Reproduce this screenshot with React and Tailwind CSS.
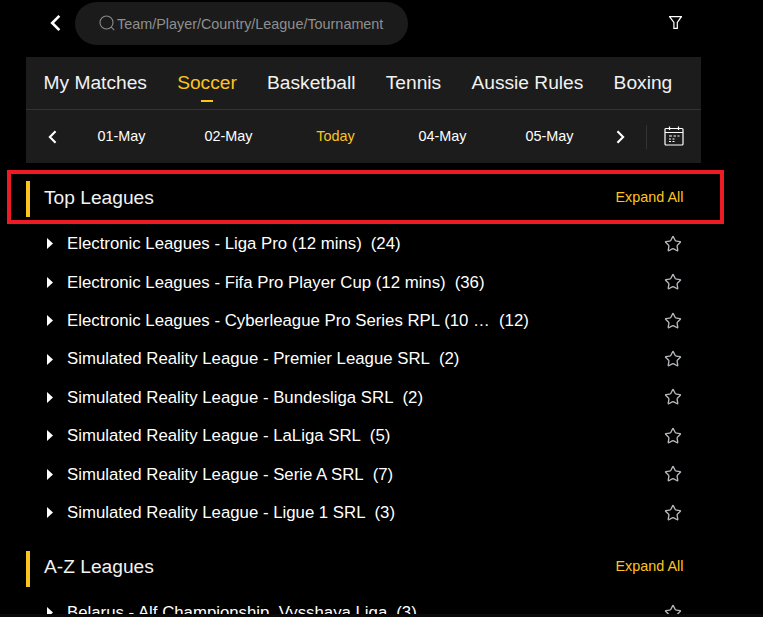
import { Star } from "lucide-react";

const tabs = ["My Matches", "Soccer", "Basketball", "Tennis", "Aussie Rules", "Boxing"];
const dates = ["01-May", "02-May", "Today", "04-May", "05-May"];
const leagues = [
  ["Electronic Leagues - Liga Pro (12 mins)", 24],
  ["Electronic Leagues - Fifa Pro Player Cup (12 mins)", 36],
  ["Electronic Leagues - Cyberleague Pro Series RPL (10 mins)", 12],
  ["Simulated Reality League - Premier League SRL", 2],
  ["Simulated Reality League - Bundesliga SRL", 2],
  ["Simulated Reality League - LaLiga SRL", 5],
  ["Simulated Reality League - Serie A SRL", 7],
  ["Simulated Reality League - Ligue 1 SRL", 3],
];

function Chevron({ dir, className }) {
  return (
    <svg viewBox="0 0 10 16" className={className} fill="none" stroke="currentColor" strokeWidth="2.4">
      <path d={dir === "left" ? "M8.5 1.5 2 8l6.5 6.5" : "M1.5 1.5 8 8l-6.5 6.5"} />
    </svg>
  );
}

function LeagueRow({ name, count }) {
  return (
    <div className="flex h-[38.4px] items-center">
      <svg viewBox="0 0 6 11" className="ml-[47px] h-[11px] w-[6px] fill-white">
        <path d="M0 0l6 5.5-6 5.5z" />
      </svg>
      <span className="ml-[14px] max-w-[423px] truncate text-[16.8px] text-white">{name}</span>
      <span className="ml-[9px] text-[16.8px] text-white">({count})</span>
      <Star className="absolute left-[664px] h-[18px] w-[18px] text-[#b4b8bc]" strokeWidth={1.8} />
    </div>
  );
}

function SectionHeader({ title, className }) {
  return (
    <div className={`flex h-9 items-center pl-[26px] pr-[79.5px] ${className}`}>
      <div className="h-9 w-1 bg-[#fcc41f]" />
      <h2 className="ml-[14px] flex-1 pb-[2px] text-[19.2px] text-[#f2f2f2]">{title}</h2>
      <span className="pb-[3px] text-[14.4px] text-[#fcc41f]">Expand All</span>
    </div>
  );
}

export default function App() {
  return (
    <div className="relative h-[617px] w-[763px] overflow-hidden bg-black font-['Liberation_Sans',Arial,sans-serif]">
      <div className="flex h-[57px] items-start">
        <Chevron dir="left" className="ml-[50px] mt-[14px] h-[18px] w-[11px] text-white" />
        <div className="ml-[14px] mt-[2px] flex h-[43px] w-[333px] items-center rounded-full bg-[#1b1b1b] pl-6">
          <svg viewBox="0 0 17 17" className="h-[17px] w-[17px] text-[#8a8a8a]" fill="none" stroke="currentColor" strokeWidth="1.1">
            <circle cx="7.5" cy="7.5" r="6.5" />
            <path d="M12.2 12.2l3 3" />
          </svg>
          <span className="ml-px pt-[2px] text-[14.4px] text-[#8f8f8f]">Team/Player/Country/League/Tournament</span>
        </div>
        <svg viewBox="0 0 13 13" className="ml-[261px] mt-[16px] h-[13px] w-[13px] text-white" fill="none" stroke="currentColor" strokeWidth="1.2">
          <path d="M.6.7h11.8L8.3 6.5v5.8H4.9V6.5z" />
        </svg>
      </div>

      <div className="ml-[26px] h-[106px] w-[675px] bg-[#1c1c1c]">
        <div className="flex h-[53px] items-center gap-[30.2px] border-b border-[#333] pl-[17.5px]">
          {tabs.map((t) => (
            <div key={t} className={`relative text-[19.2px] ${t === "Soccer" ? "text-[#fcc41f]" : "text-[#f2f2f2]"}`}>
              {t}
              {t === "Soccer" && <div className="absolute left-[24px] top-[31px] h-[2px] w-3 bg-[#fcc41f]" />}
            </div>
          ))}
        </div>
        <div className="flex h-[53px] items-center">
          <Chevron dir="left" className="ml-[22px] h-[14px] w-[9px] text-white" />
          <div className="ml-[11px] flex">
            {dates.map((d) => (
              <div key={d} className={`w-[107px] text-center text-[14.4px] ${d === "Today" ? "text-[#fcc41f]" : "text-white"}`}>
                {d}
              </div>
            ))}
          </div>
          <Chevron dir="right" className="ml-[13px] h-[14px] w-[9px] text-white" />
          <div className="ml-[21px] h-6 w-px bg-[#333]" />
          <svg viewBox="0 0 20 20" className="-mt-px ml-[17px] h-5 w-5 text-white" fill="none" stroke="currentColor" strokeWidth="1.2">
            <rect x="1" y="2.5" width="18" height="16.5" rx="1" />
            <path d="M1 6.5h18M5.5 0.5v3.5M14.5 0.5v3.5" />
            <path d="M5 10h3M9.5 10h2.5M13.5 10h2M5 13h2M8.5 13h2M5 15.5h2M8.5 15.5h2" />
          </svg>
        </div>
      </div>

      <SectionHeader title="Top Leagues" className="mt-[18px]" />
      <div className="mt-[7.7px]">
        {leagues.map(([name, count]) => (
          <LeagueRow key={name} name={name} count={count} />
        ))}
      </div>

      <SectionHeader title="A-Z Leagues" className="mt-[18.8px]" />
      <div className="mt-[7px]">
        <LeagueRow name="Belarus - Alf Championship, Vysshaya Liga" count={3} />
      </div>

      <div className="absolute left-[7px] top-[170px] h-[54px] w-[717px] border-[4px] border-[#ed1c24]" />
      <div className="absolute inset-x-0 bottom-0 h-[3px] bg-[#0a0a0a]" />
    </div>
  );
}
